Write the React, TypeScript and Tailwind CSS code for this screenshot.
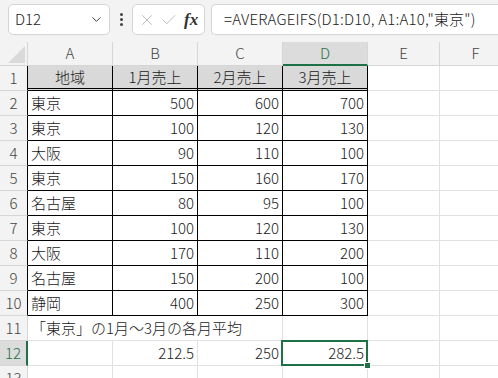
import { ChevronDown, X, Check } from 'lucide-react';

const FONT = '[font-family:"Noto_Sans_CJK_JP","Noto_Sans",sans-serif]';

const cols = ['A', 'B', 'C', 'D', 'E', 'F'];

const data: [string, string, string, string][] = [
  ['地域', '1月売上', '2月売上', '3月売上'],
  ['東京', '500', '600', '700'],
  ['東京', '100', '120', '130'],
  ['大阪', '90', '110', '100'],
  ['東京', '150', '160', '170'],
  ['名古屋', '80', '95', '100'],
  ['東京', '100', '120', '130'],
  ['大阪', '170', '110', '200'],
  ['名古屋', '150', '200', '100'],
  ['静岡', '400', '250', '300'],
];

function RowHeader({ n }: { n: number }) {
  const inTable = n <= 10;
  const selected = n === 12;
  let cls = 'border-r border-b border-[#d6d6d6] bg-[#f3f3f3] text-[#444]';
  if (inTable) cls = 'border-r border-b border-b-[#d6d6d6] border-r-black bg-[#f3f3f3] text-[#444]';
  if (selected) cls = 'border-r-2 border-b border-b-[#d6d6d6] border-r-[#1e7145] bg-[#dcdcdc] text-[#1e7145]';
  return (
    <div className={`flex items-center justify-center text-[15px] ${cls}`}>{n}</div>
  );
}

function TableRow({ n }: { n: number }) {
  const row = data[n - 1];
  const header = n === 1;
  const bottom = header ? '[border-bottom:3px_double_#000]' : 'border-b border-b-black';
  return (
    <>
      <RowHeader n={n} />
      {row.map((v, i) => (
        <div
          key={i}
          className={`flex items-center border-r border-r-black ${bottom} ${
            header
              ? 'justify-center bg-[#d9d9d9]'
              : i === 0
              ? 'justify-start pl-[3px]'
              : 'justify-end pr-[3px]'
          } text-[15px] text-[#1a1a1a]`}
        >
          {v}
        </div>
      ))}
      <div className="border-r border-b border-[#e1e1e1]" />
      <div className="border-r border-b border-[#e1e1e1]" />
    </>
  );
}

export default function App() {
  return (
    <div className={`w-[498px] h-[378px] overflow-hidden bg-white font-light ${FONT}`}>
      {/* formula bar */}
      <div className="h-[42px] bg-[#f3f3f3] flex items-start pt-[4px] pl-[8px]">
        <div className="w-[102px] h-[31px] bg-white border border-[#d4d4d4] rounded-[5px] flex items-center justify-between pl-[6px] pr-[5px]">
          <span className="text-[15px] text-[#1a1a1a]">D12</span>
          <ChevronDown size={15} strokeWidth={1.6} className="text-[#444]" />
        </div>
        <div className="w-[22px] h-[31px] flex flex-col items-center justify-center gap-[2px]">
          <div className="w-[3px] h-[3px] bg-[#444] rounded-full" />
          <div className="w-[3px] h-[3px] bg-[#444] rounded-full" />
          <div className="w-[3px] h-[3px] bg-[#444] rounded-full" />
        </div>
        <div className="w-[73px] h-[31px] bg-white border border-[#d4d4d4] rounded-[5px] flex items-center pl-[5px] gap-[4px]">
          <X size={18} strokeWidth={1.2} className="text-[#b5b5b5]" />
          <Check size={18} strokeWidth={1.2} className="text-[#b5b5b5]" />
          <span className="[font-family:'Liberation_Serif',serif] italic text-[17px] text-[#333] ml-[2px] font-semibold">fx</span>
        </div>
        <div className="ml-[6px] flex-1 h-[31px] bg-white border border-[#d4d4d4] border-r-0 rounded-l-[5px] flex items-center pl-[12px] text-[15px] tracking-[0.2px] text-[#1a1a1a] whitespace-nowrap">
          =AVERAGEIFS(D1:D10, A1:A10,"東京")
        </div>
      </div>

      {/* sheet grid */}
      <div className="grid grid-cols-[28px_85px_85px_85px_85px_72px_72px] grid-rows-[24px_repeat(13,25px)]">
        {/* select all corner */}
        <div className="relative bg-[#f3f3f3] border-r border-b border-[#d6d6d6]">
          <div className="absolute right-[2px] bottom-[2px] w-0 h-0 border-l-[17px] border-l-transparent border-b-[17px] border-b-[#dadada]" />
        </div>
        {cols.map((c) =>
          c === 'D' ? (
            <div
              key={c}
              className="flex items-center justify-center bg-[#dcdcdc] border-r border-r-[#d6d6d6] border-b-2 border-b-[#1e7145] text-[15px] text-[#1e7145]"
            >
              {c}
            </div>
          ) : (
            <div
              key={c}
              className="flex items-center justify-center bg-[#f3f3f3] border-r border-b border-[#d6d6d6] text-[15px] text-[#444]"
            >
              {c}
            </div>
          )
        )}

        {data.map((_, i) => (
          <TableRow key={i} n={i + 1} />
        ))}

        {/* row 11 */}
        <RowHeader n={11} />
        <div className="col-span-3 flex items-center pl-[3px] border-r border-b border-[#e1e1e1] text-[15px] text-[#1a1a1a] whitespace-nowrap">
          「東京」の1月～3月の各月平均
        </div>
        <div className="border-r border-b border-[#e1e1e1]" />
        <div className="border-r border-b border-[#e1e1e1]" />
        <div className="border-r border-b border-[#e1e1e1]" />

        {/* row 12 */}
        <RowHeader n={12} />
        <div className="border-r border-b border-[#e1e1e1]" />
        <div className="flex items-center justify-end pr-[3px] border-r border-b border-[#e1e1e1] text-[15px] text-[#1a1a1a]">212.5</div>
        <div className="flex items-center justify-end pr-[3px] border-r border-b border-[#e1e1e1] text-[15px] text-[#1a1a1a]">250</div>
        <div className="relative flex items-center justify-end pr-[3px] border-r border-b border-[#e1e1e1] text-[15px] text-[#1a1a1a]">
          <div className="absolute -left-[2px] -top-[1px] -right-[1px] -bottom-[1px] border-2 border-[#1e7145]" />
          <div className="absolute -right-[4px] -bottom-[4px] w-[7px] h-[7px] bg-[#1e7145] border border-white" />
          282.5
        </div>
        <div className="border-r border-b border-[#e1e1e1]" />
        <div className="border-r border-b border-[#e1e1e1]" />

        {/* row 13 */}
        <RowHeader n={13} />
        {cols.map((c) => (
          <div key={c} className="border-r border-b border-[#e1e1e1]" />
        ))}
      </div>
    </div>
  );
}
